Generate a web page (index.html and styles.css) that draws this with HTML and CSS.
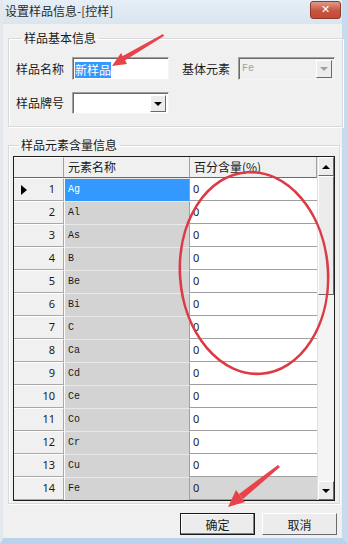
FILE: index.html
```html
<!DOCTYPE html>
<html lang="zh-CN">
  <head>
    <meta charset="UTF-8" />
    <title>设置样品信息-[控样]</title>
    <link rel="stylesheet" href="styles.css">
  </head>
  <body>
    <div class="window">
      <div class="titlebar">
        <span class="title">设置样品信息-[控样]</span>
        <span class="close">✕</span>
      </div>

      <div class="content">
        <fieldset class="group group-basic">
          <legend>样品基本信息</legend>
          <div class="form-row">
            <label class="lbl">样品名称</label>
            <div class="textbox"><span class="sel">新样品</span></div>
            <label class="lbl lbl-right">基体元素</label>
            <div class="combo combo-disabled">
              <span class="combo-text">Fe</span>
              <span class="combo-btn"><span class="arrow-down gray"></span></span>
            </div>
          </div>
          <div class="form-row row-2">
            <label class="lbl">样品牌号</label>
            <div class="combo">
              <span class="combo-text"></span>
              <span class="combo-btn"><span class="arrow-down"></span></span>
            </div>
          </div>
        </fieldset>

        <fieldset class="group group-grid">
          <legend>样品元素含量信息</legend>
          <div class="grid">
            <div class="grid-body">
              <div class="grid-row grid-head">
                <div class="cell rh"></div>
                <div class="cell hd">元素名称</div>
                <div class="cell hd">百分含量(%)</div>
              </div>
              <div id="rows"></div>
            </div>
            <div class="scrollbar">
              <div class="sb-btn"><span class="arrow-up"></span></div>
              <div class="sb-thumb"></div>
              <div class="sb-track"></div>
              <div class="sb-btn"><span class="arrow-down"></span></div>
            </div>
          </div>
        </fieldset>

        <div class="buttons">
          <button class="btn btn-default">确定</button>
          <button class="btn">取消</button>
        </div>
      </div>

      <svg class="marks" width="348" height="544" viewBox="0 0 348 544">
        <ellipse cx="254" cy="273" rx="74" ry="101" transform="rotate(-4 254 273)" fill="none" stroke="#dc3a44" stroke-width="2.6" />
        <polygon points="163,34 164,36 124,61 121,57" fill="#e8434a" />
        <polygon points="112,66 121,53 127,64" fill="#e8434a" />
        <polygon points="278,465 280,467 243,499 239,494" fill="#e8434a" />
        <polygon points="228,507 236,490 245,502" fill="#e8434a" />
      </svg>
    </div>

    <script>
      const elementos = ["Ag", "Al", "As", "B", "Be", "Bi", "C", "Ca", "Cd", "Ce", "Co", "Cr", "Cu", "Fe"];
      const rows = document.getElementById("rows");

      elementos.forEach((el, i) => {
        const row = document.createElement("div");
        row.className = "grid-row";
        if (i === 0) row.classList.add("current");
        if (i === elementos.length - 1) row.classList.add("last");
        row.innerHTML =
          '<div class="cell rh">' + (i === 0 ? '<span class="pointer"></span>' : "") + (i + 1) + "</div>" +
          '<div class="cell name">' + el + "</div>" +
          '<div class="cell val">0</div>';
        rows.appendChild(row);
      });
    </script>
  </body>
</html>
```

FILE: styles.css
```css
* {
  margin: 0;
  padding: 0;
  box-sizing: border-box;
}

body {
  width: 348px;
  height: 544px;
  overflow: hidden;
  background: #f0f0f0;
  font-family: "Noto Sans CJK SC", "Noto Sans", sans-serif;
  font-size: 12px;
  color: #1a1a1a;
}

.window {
  position: relative;
  width: 348px;
  height: 544px;
  background: #f0f0f0;
  border-left: 3px solid #e4e8ec;
  border-right: 6px solid #c6dbee;
  border-bottom: 6px solid #b9d3ec;
}

.titlebar {
  height: 24px;
  display: flex;
  align-items: center;
  justify-content: space-between;
  padding-left: 2px;
  background: linear-gradient(#e6eef6, #dae5f0);
}

.title {
  font-size: 12px;
  color: #2a2a2a;
  line-height: 16px;
  margin-top: -3px;
}

.close {
  width: 31px;
  height: 18px;
  margin-top: -5px;
  margin-right: 1px;
  border-radius: 3px;
  background: linear-gradient(#e09a88, #c6543f 55%, #c24a36);
  border: 1px solid #8e3a2c;
  color: #fff;
  font-size: 11px;
  font-weight: bold;
  font-family: "DejaVu Sans", sans-serif;
  display: flex;
  align-items: center;
  justify-content: center;
}

.content {
  padding: 0 3px 0 5px;
}

.group {
  width: 332px;
  border: 1px solid #d5d9dd;
  box-shadow: inset 1px 1px #fff, 1px 1px #fff;
}

.group legend {
  margin-left: 6px;
  padding: 0 3px 0 2px;
  font-size: 12px;
  line-height: 16px;
}

.group-basic {
  margin-top: 6px;
  padding: 11px 7px 12px 7px;
}

.form-row {
  display: flex;
  align-items: center;
  height: 23px;
}

.row-2 {
  margin-top: 12px;
  height: 22px;
}

.lbl {
  width: 56px;
  font-size: 12px;
  line-height: 16px;
}

.lbl-right {
  margin-left: 13px;
}

.textbox {
  width: 97px;
  height: 23px;
  background: #fff;
  border: 1px solid;
  border-color: #a0a0a0 #f4f4f4 #f4f4f4 #a0a0a0;
  box-shadow: inset 1px 1px #6a6a6a;
  padding: 3px 0 0 2px;
}

.sel {
  background: #3399ff;
  color: #fff;
  font-size: 12px;
  line-height: 16px;
  display: inline-block;
}

.combo {
  width: 97px;
  height: 22px;
  background: #fff;
  border: 1px solid;
  border-color: #a0a0a0 #f4f4f4 #f4f4f4 #a0a0a0;
  box-shadow: inset 1px 1px #6a6a6a;
  display: flex;
  justify-content: space-between;
  align-items: stretch;
  padding: 2px 2px 1px 3px;
}

.combo-disabled {
  height: 23px;
  background: #f0f0f0;
}

.combo-text {
  font-family: "Liberation Mono", monospace;
  font-size: 10px;
  line-height: 17px;
  color: #a0a0a0;
}

.combo-btn {
  width: 16px;
  background: #ececec;
  border: 1px solid;
  border-color: #fff #6a6a6a #6a6a6a #fff;
  display: flex;
  align-items: center;
  justify-content: center;
}

.arrow-down,
.arrow-up {
  width: 0;
  height: 0;
  border-left: 4px solid transparent;
  border-right: 4px solid transparent;
}

.arrow-down {
  border-top: 4px solid #000;
}

.arrow-down.gray {
  border-top-color: #a0a0a0;
}

.arrow-up {
  border-bottom: 4px solid #000;
}

.group-grid {
  margin-top: 10px;
  padding: 3px 0 2px 4px;
}

.grid {
  width: 322px;
  height: 345px;
  border: 1px solid #1e1e1e;
  display: flex;
  background: #f0f0f0;
}

.grid-body {
  width: 303px;
  overflow: hidden;
}

.grid-row {
  display: grid;
  grid-template-columns: 50px 126px 127px;
  height: 23px;
}

.grid-head {
  height: 21px;
}

.cell {
  font-size: 12px;
  line-height: 22px;
  overflow: hidden;
  white-space: nowrap;
}

.grid-head .cell {
  background: #f0f0f0;
  border-right: 1px solid #a0a0a0;
  border-bottom: 1px solid #6a6a6a;
  line-height: 20px;
  font-size: 12px;
  padding-left: 4px;
}

.rh {
  position: relative;
  background: #f0f0f0;
  border-top: 1px solid #fff;
  border-bottom: 1px solid #a8a8a8;
  border-right: 1px solid #a8a8a8;
  text-align: right;
  padding-right: 8px;
  font-family: "Noto Sans", sans-serif;
  font-size: 11px;
  line-height: 20px;
}

.pointer {
  position: absolute;
  left: 7px;
  top: 6px;
  width: 0;
  height: 0;
  border-top: 5px solid transparent;
  border-bottom: 5px solid transparent;
  border-left: 6px solid #000;
}

.name {
  background: #d3d3d3;
  border-top: 1px solid #e8e8e8;
  border-left: 1px solid #fff;
  border-right: 1px solid #a0a0a0;
  padding-left: 3px;
  font-family: "Liberation Mono", monospace;
  font-size: 10px;
  line-height: 21px;
}

.val {
  background: #fff;
  border-bottom: 1px solid #a0a0a0;
  padding-left: 3px;
  font-family: "Noto Sans", sans-serif;
  font-size: 11px;
  line-height: 22px;
}

.current .name {
  background: #3399ff;
  color: #fff;
}

.last .val {
  background: #d6d6d6;
}

.scrollbar {
  width: 17px;
  display: flex;
  flex-direction: column;
  background: #f0f0f0;
  border-left: 1px solid #e0e0e0;
}

.sb-btn {
  height: 19px;
  background: #ececec;
  border: 1px solid;
  border-color: #fff #6a6a6a #6a6a6a #fff;
  display: flex;
  align-items: center;
  justify-content: center;
}

.sb-thumb {
  height: 119px;
  background: #ececec;
  border: 1px solid;
  border-color: #fff #6a6a6a #6a6a6a #fff;
}

.sb-track {
  flex: 1;
  background: #f4f4f4;
}

.buttons {
  display: flex;
  justify-content: flex-end;
  gap: 7px;
  margin-top: 9px;
  padding-right: 2px;
}

.btn {
  width: 75px;
  height: 22px;
  background: #ececec;
  border: 1px solid;
  border-color: #fff #6a6a6a #6a6a6a #fff;
  font-family: "Noto Sans CJK SC", sans-serif;
  font-size: 12px;
  color: #1a1a1a;
}

.btn-default {
  border: 1px solid #1a1a1a;
  box-shadow: inset -1px -1px #808080, inset 1px 1px #fff;
}

.marks {
  position: absolute;
  left: -3px;
  top: 0;
  pointer-events: none;
}
```
